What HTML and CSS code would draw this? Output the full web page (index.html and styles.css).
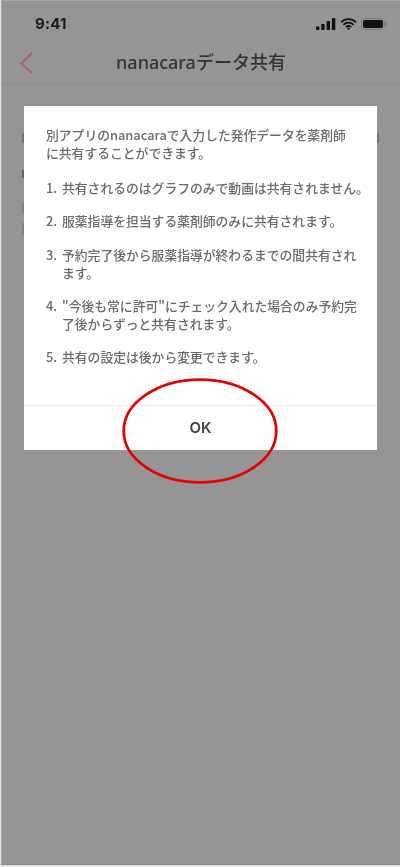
FILE: index.html
```html
<!DOCTYPE html>
<html lang="ja">
<head>
<meta charset="utf-8">
<title>nanacaraデータ共有</title>
<link rel="stylesheet" href="styles.css">
</head>
<body>
<div class="phone">
  <div class="status">
    <span class="time">9:41</span>
    <div class="status-icons">
      <svg width="20" height="12" viewBox="0 0 20 12"><rect x="0" y="8.5" width="3.4" height="3.5" rx=".8"/><rect x="5.3" y="6" width="3.4" height="6" rx=".8"/><rect x="10.6" y="3" width="3.4" height="9" rx=".8"/><rect x="15.9" y="0" width="3.4" height="12" rx=".8"/></svg>
      <svg width="17" height="12" viewBox="0 0 17 12"><path d="M1 4.2a10.6 10.6 0 0 1 15 0M3.4 6.8a7.2 7.2 0 0 1 10.2 0M5.9 9.1a3.6 3.6 0 0 1 5.2 0" fill="none" stroke="#111" stroke-width="1.8"/><path d="M8.5 12l-1.6-1.7a2.3 2.3 0 0 1 3.2 0z"/></svg>
      <svg width="26" height="12" viewBox="0 0 26 12"><rect x=".5" y=".5" width="23" height="11" rx="3" fill="none" stroke="#7d7d7d"/><rect x="2" y="2" width="20" height="8" rx="2"/><rect x="24.5" y="4" width="1.5" height="4" fill="#7d7d7d"/></svg>
    </div>
  </div>
  <header class="nav">
    <svg class="back" width="14" height="24" viewBox="0 0 14 24"><path d="M12 2L1.5 12.5 12 22" fill="none" stroke="#ad5a85" stroke-width="2.2"/></svg>
    <h1 class="title">nanacaraデータ共有</h1>
  </header>
  <i class="tick tick-a"></i><i class="tick tick-b"></i><i class="tick tick-c"></i><i class="tick tick-d"></i><i class="tick tick-e"></i>
  <div class="dialog">
    <div class="dialog-text">
      <p class="lead">別アプリのnanacaraで入力した発作データを薬剤師<br>に共有することができます。</p>
      <ol class="items">
        <li><span class="num">1.</span><span>共有されるのはグラフのみで動画は共有されません。</span></li>
        <li><span class="num">2.</span><span>服薬指導を担当する薬剤師のみに共有されます。</span></li>
        <li><span class="num">3.</span><span>予約完了後から服薬指導が終わるまでの間共有され<br>ます。</span></li>
        <li><span class="num">4.</span><span>"今後も常に許可"にチェック入れた場合のみ予約完<br>了後からずっと共有されます。</span></li>
        <li><span class="num">5.</span><span>共有の設定は後から変更できます。</span></li>
      </ol>
    </div>
    <div class="ok">OK</div>
  </div>
  <svg class="circle" width="156" height="106" viewBox="0 0 156 106"><ellipse cx="78" cy="53" rx="76.3" ry="51.3" fill="none" stroke="#e60000" stroke-width="2.7"/></svg>
</div>
</body>
</html>
```
FILE: styles.css
```css
* { box-sizing: border-box; }
html, body { margin: 0; padding: 0; background: #e2e2e2; }
body { width: 400px; height: 867px; overflow: hidden; font-family: "Liberation Sans", "Noto Sans CJK JP", sans-serif; }
.phone {
  position: relative;
  width: 399px;
  height: 865px;
  margin-left: 1px;
  background: #959595;
  border-top: 1px solid #a8a8a8;
  border-left: 1px solid #a8a8a8;
  border-bottom: 1px solid #8a8a8a;
  display: flex;
  flex-direction: column;
  filter: blur(.4px);
}
.status {
  height: 39px;
  padding: 6px 13px 0 33px;
  display: flex;
  justify-content: space-between;
  align-items: center;
}
.time { font-size: 15px; font-weight: 700; color: #1c1c1c; font-family: "Inter", "Liberation Sans", sans-serif; letter-spacing: .2px; }
.status-icons { display: flex; align-items: center; gap: 4px; }
.status-icons svg { fill: #111; }
.nav {
  position: relative;
  height: 45px;
  border-bottom: 1px solid #8d8d8d;
  display: flex;
  align-items: center;
  justify-content: center;
}
.back { position: absolute; left: 18px; top: 11px; }
.title { margin: 0 0 2px; font-size: 18px; font-weight: 500; color: #333; font-family: "Noto Sans", "Noto Sans CJK JP", sans-serif; }
.tick { position: absolute; width: 2px; background: #757575; }
.tick-a { left: 20px; top: 132px; height: 10px; }
.tick-b { left: 20px; top: 169px; height: 8px; background: #606060; }
.tick-c { left: 20px; top: 202px; height: 10px; background: #808080; }
.tick-d { left: 20px; top: 222px; height: 12px; background: #808080; }
.tick-e { left: 375px; top: 132px; height: 10px; }
.dialog {
  position: absolute;
  left: 22px;
  top: 105px;
  width: 353px;
  height: 344px;
  background: #fff;
  display: flex;
  flex-direction: column;
}
.dialog-text {
  flex: 1;
  padding: 20px 0 0 22px;
  font-size: 12.8px;
  font-weight: 500;
  line-height: 18px;
  color: #6a6a6a;
  font-family: "Noto Sans CJK JP", sans-serif;
  white-space: nowrap;
}
.lead { margin: 0 0 17px; }
.items { list-style: none; margin: 0; padding: 0; }
.items li { display: flex; margin-bottom: 15.3px; }
.num { width: 16px; flex: none; }
.ok {
  height: 45px;
  padding-bottom: 2px;
  border-top: 1px solid #eee;
  display: flex;
  align-items: center;
  justify-content: center;
  font-size: 15px;
  font-weight: 600;
  color: #444;
  font-family: "Inter", sans-serif;
}
.circle { position: absolute; left: 120px; top: 377px; }
```
